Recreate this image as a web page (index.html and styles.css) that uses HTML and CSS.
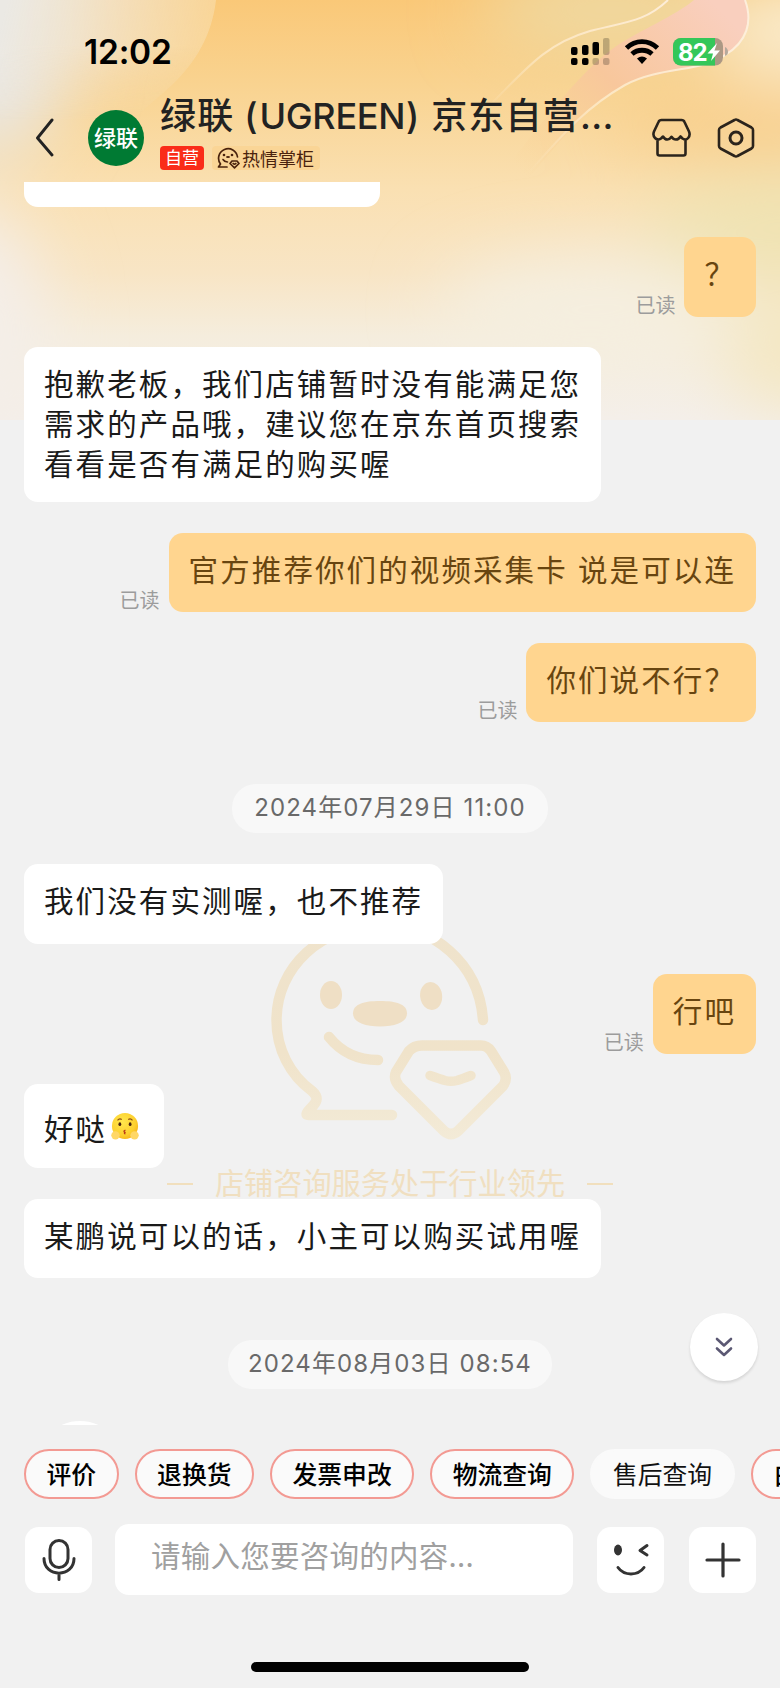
FILE: index.html
```html
<!DOCTYPE html>
<html lang="zh-CN">
<head>
<meta charset="utf-8">
<title>绿联（UGREEN）京东自营</title>
<link rel="stylesheet" href="styles.css">
</head>
<body>
<div class="app">
  <svg class="backdrop" width="780" height="420" viewBox="0 0 780 420" aria-hidden="true">
    <defs>
      <linearGradient id="base" x1="0" y1="0" x2="0" y2="1">
        <stop offset="0" stop-color="#fac878"/><stop offset=".2" stop-color="#f9d390"/><stop offset=".45" stop-color="#fae0b2"/><stop offset=".65" stop-color="#f8e5c5"/><stop offset=".8" stop-color="#f5eddd"/><stop offset="1" stop-color="#f4efea"/>
      </linearGradient>
      <linearGradient id="veil" gradientUnits="userSpaceOnUse" x1="0" y1="30" x2="215" y2="80">
        <stop offset="0" stop-color="#ebe9e4"/><stop offset=".5" stop-color="#f3e2c6" stop-opacity=".85"/><stop offset="1" stop-color="#f9d99f" stop-opacity=".7"/>
      </linearGradient>
      <linearGradient id="fadeDown" x1="0" y1="0" x2="0" y2="1">
        <stop offset="0" stop-color="#fff"/><stop offset=".3" stop-color="#fff"/><stop offset=".8" stop-color="#000"/>
      </linearGradient>
      <mask id="veilMask"><rect width="230" height="150" fill="url(#fadeDown)"/></mask>
      <linearGradient id="pink" gradientUnits="userSpaceOnUse" x1="710" y1="0" x2="530" y2="180">
        <stop offset="0" stop-color="#f9cfbe"/><stop offset=".5" stop-color="#f8c79c"/><stop offset="1" stop-color="#f9d596" stop-opacity="0"/>
      </linearGradient>
      <linearGradient id="line" gradientUnits="userSpaceOnUse" x1="700" y1="20" x2="510" y2="150">
        <stop offset="0" stop-color="#fdeedb"/><stop offset=".6" stop-color="#fce6c0"/><stop offset="1" stop-color="#fce6c0" stop-opacity="0"/>
      </linearGradient>
      <filter id="soft" x="-100%" y="-150%" width="300%" height="400%"><feGaussianBlur stdDeviation="34"/></filter>
    </defs>
    <rect width="780" height="420" fill="url(#base)"/>
    <g filter="url(#soft)">
      <ellipse cx="800" cy="30" rx="100" ry="50" fill="#faeccf"/>
      <ellipse cx="610" cy="10" rx="130" ry="45" fill="#efd9a2"/>
      <ellipse cx="740" cy="128" rx="130" ry="24" fill="#f8cb84"/>
      <ellipse cx="790" cy="225" rx="150" ry="50" fill="#efe3b2"/>
      <ellipse cx="590" cy="310" rx="150" ry="55" fill="#f5efe0"/>
      <ellipse cx="-40" cy="330" rx="90" ry="130" fill="#f4eee8"/>
      <ellipse cx="800" cy="350" rx="80" ry="60" fill="#f4e7c2"/>
      <ellipse cx="-10" cy="40" rx="80" ry="120" fill="#e9e7e3"/>
    </g>
    <path d="M0 0H216C212 35 196 62 172 85C150 105 125 125 100 150H0Z" fill="url(#veil)" mask="url(#veilMask)"/>
    <path d="M694 0C675 16 640 30 615 47C585 68 550 110 490 190H518C550 155 585 105 625 85C665 67 720 72 740 40C752 22 748 8 745 0Z" fill="url(#pink)"/>
    <path d="M668 0C645 22 625 22 590 31C545 44 525 70 490 105" fill="none" stroke="url(#line)" stroke-width="2"/>
    <path d="M745 0C753 22 747 42 725 55C705 72 660 66 625 85C590 105 570 125 518 185" fill="none" stroke="url(#line)" stroke-width="2"/>
  </svg>

  <header class="header">
    <div class="status">
      <span class="clock">12:02</span>
      <svg class="status-icons" width="160" height="30" viewBox="0 0 160 30">
        <g><rect x="1" y="9" width="6.5" height="8" rx="2"/><rect x="12" y="7" width="6.5" height="10" rx="2"/><rect x="22.500" y="4" width="6.500" height="13" rx="2"/><rect x="33" y="0" width="6.500" height="17" rx="2" opacity=".22"/>
        <rect x="1" y="20" width="6.500" height="7" rx="2"/><rect x="12" y="20" width="6.500" height="7" rx="2"/><rect x="22.500" y="20" width="6.500" height="7" rx="2" opacity=".22"/><rect x="33" y="20" width="6.500" height="7" rx="2" opacity=".22"/></g>
        <g fill="none" stroke="#000" stroke-width="4.800"><path d="M56.500 10C65.500 1.500 78.500 1.500 87.500 10"/><path d="M62 16C67.500 11 76.500 11 82 16"/></g>
        <path d="M67 20.500Q72 16.500 77 20.500L72 26Z"/>
        <rect x="103" y="0" width="50" height="27.500" rx="8" fill="#ac9884"/>
        <path d="M111 0H145V27.500H111A8 8 0 0 1 103 19.500V8A8 8 0 0 1 111 0Z" fill="#34c759"/>
        <path d="M155 9Q158 10.500 158 13.800T155 18Z" fill="#b5a99c"/>
        <text class="battery" x="108" y="22.500">82</text>
        <path d="M147 5L137.500 15.500H143L141 23L150 12.500H144.500Z" fill="#fff"/>
      </svg>
    </div>
    <div class="nav">
      <svg class="back" width="20" height="40" viewBox="0 0 20 40"><path d="M17 2L2.500 20L17 37" fill="none" stroke="#222" stroke-width="2.900" stroke-linecap="round" stroke-linejoin="round"/></svg>
      <div class="logo">绿联</div>
      <div class="shop">
        <div class="title"><span>绿联</span><span class="paren">(</span><span class="latin">UGREEN</span><span class="paren">)</span><span class="rest">京东自营<b>...</b></span></div>
        <div class="tags">
          <span class="tag-self">自营</span>
          <span class="tag-warm">
            <svg width="24" height="22" viewBox="0 0 24 22"><path d="M11 20H2.500L4.500 17A9.500 9.500 0 1 1 21.500 10" fill="none" stroke="#4a230d" stroke-width="1.700" stroke-linecap="round" stroke-linejoin="round"/><circle cx="8" cy="8" r="1.300" fill="#4a230d"/><circle cx="16" cy="8" r="1.300" fill="#4a230d"/><ellipse cx="12" cy="10" rx="2" ry="1.100" fill="#4a230d"/><path d="M7 12.500Q8.500 15 11.500 15" fill="none" stroke="#4a230d" stroke-width="1.600" stroke-linecap="round"/><path d="M16 14H21L23 16.500L18.500 20.800L14 16.500ZM17.200 16.500Q18.500 17.700 19.800 16.500" fill="none" stroke="#4a230d" stroke-width="1.700" stroke-linecap="round" stroke-linejoin="round"/></svg>
            热情掌柜
          </span>
        </div>
      </div>
      <svg class="nav-icons" width="104" height="42" viewBox="0 0 104 42" fill="none" stroke="#2b241c" stroke-width="2.600" stroke-linejoin="round" stroke-linecap="round">
        <path d="M9.500 2H29.500C31 2 32 2.700 32.500 4L37 13.500C39 18.500 35 23.500 30.500 20.500L28.500 18.500C26 22.500 22 22.500 19.500 18.800C17 22.500 13.500 22.500 11 18.500L9 20.500C4.500 23.500 0 18.500 2 13.500L6.500 4C7 2.700 8 2 9.500 2ZM5.500 21.500V35.500Q5.500 37.500 7.500 37.500H31.500Q33.500 37.500 33.500 35.500V21.500"/>
        <path d="M82.500 2Q84 1 85.500 2L99.500 9.500Q101 10.400 101 12V28Q101 29.500 99.500 30.500L85.500 38Q84 39 82.500 38L68.500 30.500Q67 29.500 67 28V12Q67 10.400 68.500 9.500Z"/><circle cx="84" cy="20" r="6" stroke-width="3"/>
      </svg>
    </div>
  </header>

  <main class="chat">
    <div class="watermark">
      <svg width="250" height="240" viewBox="0 0 250 240" fill="none" stroke="url(#wm)" stroke-width="10.500" stroke-linecap="round" stroke-linejoin="round">
        <defs><linearGradient id="wm" gradientUnits="userSpaceOnUse" x1="0" y1="0" x2="0" y2="230"><stop offset="0" stop-color="#efe3cc"/><stop offset=".6" stop-color="#f0e3ca"/><stop offset="1" stop-color="#f3ebd8"/></linearGradient></defs>
        <path d="M218 105C214 48 168 10 115 10C57 10 11.500 52 11.500 105C11.500 134 25 160 47 176C55 183 51 188 46 193C40 199 41 200 44 200H127"/>
        <path d="M64 122C76 137 92 145 113 145"/>
        <path d="M157 130.500H216Q222 130.500 226 136L239 157Q243 164 238 171L193 216Q186 222 179 216L134 171Q128 164 131 157L144 136Q149 130.500 157 130.500Z"/>
        <path d="M165 160.500Q175 164 180 165.500Q186 167 192 165.500Q197 164 206 160.500" stroke-width="9.500"/>
        <g fill="#efdfc5" stroke="none"><ellipse cx="66" cy="80" rx="11" ry="14"/><ellipse cx="166" cy="81" rx="11" ry="14" transform="rotate(-8 166 80)"/><path d="M115 86C131 86 142 89 142 98.500C142 107 131 111.500 115 111.500S88 107 88 98.500C88 89 99 86 115 86Z"/></g>
      </svg>
      <div class="watermark-text"><i></i><span>店铺咨询服务处于行业领先</span><i></i></div>
    </div>
    <div class="bubble peek"></div>
    <div class="row mine"><span class="read">已读</span><div class="bubble">？</div></div>
    <div class="row"><div class="bubble long">抱歉老板，我们店铺暂时没有能满足您<br>需求的产品哦，建议您在京东首页搜索<br>看看是否有满足的购买喔</div></div>
    <div class="row mine"><span class="read">已读</span><div class="bubble wide">官方推荐你们的视频采集卡 说是可以连</div></div>
    <div class="row mine"><span class="read">已读</span><div class="bubble">你们说不行？</div></div>
    <div class="date">2024年07月29日 11:00</div>
    <div class="row"><div class="bubble">我们没有实测喔，也不推荐</div></div>
    <div class="row mine"><span class="read">已读</span><div class="bubble">行吧</div></div>
    <div class="row"><div class="bubble emoji-bubble">好哒<svg class="emoji" width="28" height="29" viewBox="0 0 30 30">
      <defs><radialGradient id="face" cx=".4" cy=".35" r=".7"><stop offset="0" stop-color="#ffe74d"/><stop offset=".7" stop-color="#fdd02f"/><stop offset="1" stop-color="#f7b318"/></radialGradient></defs>
      <circle cx="15" cy="14.500" r="14" fill="url(#face)"/><ellipse cx="9.500" cy="12.500" rx="1.500" ry="2" fill="#4b2410"/><ellipse cx="20.500" cy="12.500" rx="1.500" ry="2" fill="#4b2410"/><path d="M7 8.500Q9 5.800 11.500 7.500M18.500 7.500Q21 5.800 23 8.500" fill="none" stroke="#8a4a12" stroke-width="1.200"/><path d="M15.500 19Q12.500 20 15 21.200Q13.500 22.500 15.500 23" fill="none" stroke="#bb3b17" stroke-width="1.400"/>
      <circle cx="4.800" cy="24.500" r="4.500" fill="#ffd766"/><circle cx="25.200" cy="24.500" r="4.500" fill="#ffd766"/></svg></div></div>
    <div class="row"><div class="bubble">某鹏说可以的话，小主可以购买试用喔</div></div>
    <div class="date second">2024年08月03日 08:54</div>
    <div class="next-avatar"></div>
    <button class="jump" aria-label="最新消息"><svg width="20" height="22" viewBox="0 0 20 22" fill="none" stroke="#5b5873" stroke-width="2.600" stroke-linecap="round" stroke-linejoin="round"><path d="M3 3L10 9.500L17 3M3 12.500L10 19L17 12.500"/></svg></button>
  </main>

  <footer class="footer">
    <div class="chips">
      <span class="chip hot">评价</span><span class="chip hot">退换货</span><span class="chip hot">发票申改</span><span class="chip hot">物流查询</span><span class="chip">售后查询</span><span class="chip hot">白条</span>
    </div>
    <div class="composer">
      <div class="square"><svg width="34" height="44" viewBox="0 0 34 44" fill="none" stroke="#333" stroke-width="3" stroke-linecap="round"><rect x="8" y="2.500" width="18" height="27" rx="9"/><path d="M2 20.500C2 40 32 40 32 20.500M17 36V41.500"/></svg></div>
      <div class="input">请输入您要咨询的内容...</div>
      <div class="square smile"><svg width="38" height="34" viewBox="0 0 38 34" fill="none" stroke="#333" stroke-width="3" stroke-linecap="round" stroke-linejoin="round"><ellipse cx="6" cy="7" rx="4" ry="5.400" fill="#333" stroke="none"/><path d="M35 2.500L28 7.500L35 12M6 24.500C12 33 26 33 32 24.500"/></svg></div>
      <div class="square plus"><svg width="36" height="36" viewBox="0 0 36 36" fill="none" stroke="#333" stroke-width="3.200" stroke-linecap="round"><path d="M2 18H34M18 2V34"/></svg></div>
    </div>
    <div class="home"></div>
  </footer>
</div>
</body>
</html>
```
FILE: styles.css
```css
* { box-sizing: border-box; }
body { margin: 0; background: #f1f1f1; font-family: Inter, "Noto Sans CJK SC", sans-serif; color: #1a1a1a; }
.app { position: relative; width: 780px; height: 1688px; overflow: hidden; display: flex; flex-direction: column; background: #f1f1f1; }
.backdrop { position: absolute; top: 0; left: 0; }
.header { position: relative; height: 182px; flex: none; }
.status { display: flex; justify-content: space-between; align-items: flex-start; height: 96px; padding: 38px 50px 0 84px; }
.clock { font-size: 33.5px; line-height: 29px; font-weight: 600; color: #000; letter-spacing: -0.2px; }
.battery { font: 700 24px Inter, sans-serif; fill: #fff; letter-spacing: -1px; }
.nav { display: flex; height: 86px; padding-left: 35px; }
.back { margin-top: 22px; }
.logo { width: 56px; height: 56px; margin: 14px 0 0 33px; border-radius: 50%; background: #007a33; color: #fff; font-size: 22px; font-weight: 500; line-height: 56px; text-align: center; }
.shop { width: 470px; margin-left: 16px; }
.title { display: flex; height: 40px; font-size: 36px; line-height: 41px; font-weight: 500; color: #222; letter-spacing: 1.2px; white-space: nowrap; }
.paren { width: 16px; text-align: center; }
.title .paren:nth-child(2) { margin-left: 9px; }
.latin { letter-spacing: -0.3px; }
.rest { margin-left: 10px; }
.rest b { font-weight: 500; letter-spacing: 0.3px; }
.tags { display: flex; gap: 8px; margin-top: 10px; }
.tag-self { width: 44px; height: 24px; border-radius: 4px; background: #fa2c19; color: #fff; font-size: 17px; line-height: 24px; text-align: center; }
.tag-warm { display: flex; align-items: center; gap: 2px; height: 24px; width: 108px; padding-left: 4px; border-radius: 4px; background: #fad596; color: #4a230d; font-size: 18px; white-space: nowrap; }
.nav-icons { flex: none; margin: 22px 0 0 22px; }
.chat { position: relative; flex: none; height: 1243px; overflow: hidden; padding: 0 24px; }
.row { position: relative; display: flex; align-items: flex-end; margin-bottom: 30.200px; }
.mine { justify-content: flex-end; }
.bubble { min-height: 79.800px; padding: 15px 20px 19px; border-radius: 14px; background: #fff; font-size: 29.500px; line-height: 40px; letter-spacing: 2.100px; white-space: nowrap; font-family: "Noto Sans CJK SC", sans-serif; }
.long { height: 155.500px; }
.mine .bubble { background: #ffd58f; color: #684510; }
.mine .wide { word-spacing: 1.500px; }
.peek { position: relative; width: 356px; min-height: 0; height: 25px; padding: 0; margin-bottom: 30px; border-radius: 0 0 14px 14px; }
.read { margin: 0 9px 0 0; font-size: 20px; line-height: 24px; color: #9c9c9c; font-family: "Noto Sans CJK SC", sans-serif; }
.date { position: relative; width: 316px; height: 49px; margin: 62px auto 31px; border-radius: 24px; background: #f8f8f8; color: #696969; font-size: 24px; line-height: 48px; text-align: center; letter-spacing: 1.100px; white-space: nowrap; }
.date.second { width: 324px; margin-bottom: 32px; }
.emoji-bubble { display: flex; align-items: center; height: 84px; padding-top: 21px; }
.emoji { margin: -2px 5px 0 4px; }
.watermark { position: absolute; top: 733px; left: 0; width: 780px; display: flex; flex-direction: column; align-items: center; }
.watermark-text { display: flex; align-items: center; gap: 22px; margin-top: 14px; font-size: 29.2px; line-height: 30px; color: #f0dfc0; white-space: nowrap; }
.watermark-text i { width: 26px; height: 2px; background: #f1dfbd; }
.next-avatar { position: relative; width: 90px; height: 90px; margin-left: 11px; border-radius: 50%; background: #fff; }
.jump { position: absolute; right: 22px; top: 1131px; width: 68px; height: 68px; padding: 0; border: 0; border-radius: 50%; background: #fff; box-shadow: 0 2px 3px rgba(0,0,0,.12); display: flex; align-items: center; justify-content: center; }
.footer { flex: 1; display: flex; flex-direction: column; align-items: center; }
.chips { display: flex; gap: 16px; width: 780px; margin-top: 24px; padding-left: 24px; overflow: hidden; }
.chip { flex: none; height: 50px; padding: 0 20.500px; border: 2px solid #fafafa; border-radius: 25px; background: #fafafa; color: #111; font: 400 24.800px/45px "Noto Sans CJK SC", sans-serif; }
.chip.hot { border-color: #f39a93; font-weight: 500; color: #000; }
.composer { display: flex; align-items: center; width: 780px; padding-left: 25px; margin-top: 25px; }
.square { width: 67px; height: 66px; border-radius: 14px; background: #fff; display: flex; align-items: center; justify-content: center; }
.input { width: 458px; height: 71px; margin: 0 23px; padding-left: 36px; border-radius: 14px; background: #fff; color: #a0a0a0; font: 400 29.500px/61px "Noto Sans CJK SC", sans-serif; letter-spacing: .25px; }
.smile { margin-left: 1px; }
.plus { margin-left: 25px; }
.home { width: 278px; height: 10px; margin-top: 67px; border-radius: 5px; background: #000; }
```
